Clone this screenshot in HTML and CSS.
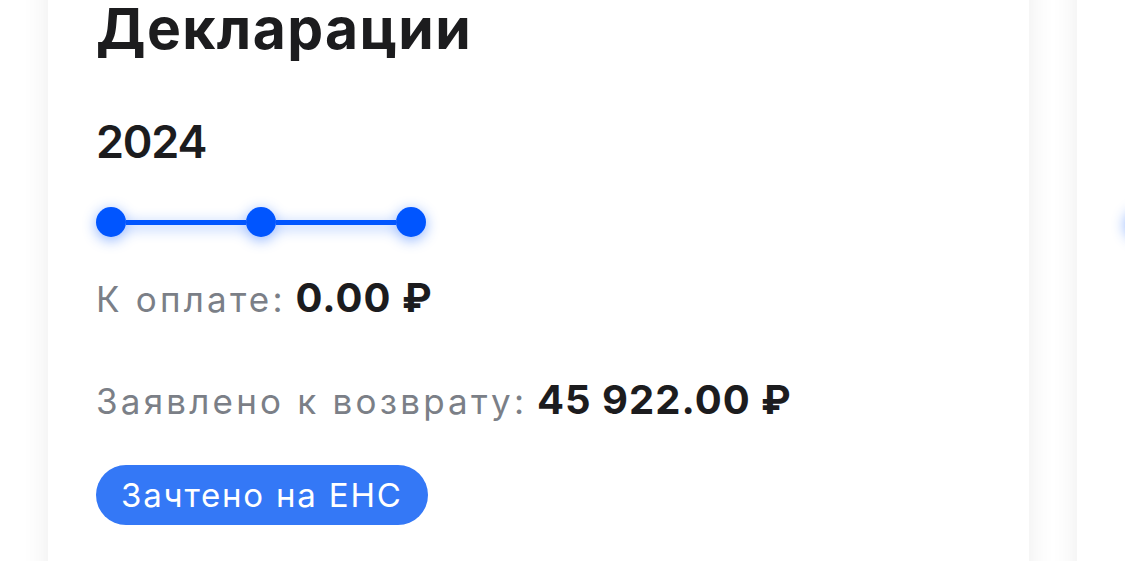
FILE: index.html
```html
<!DOCTYPE html>
<html lang="ru">
<head>
<meta charset="utf-8">
<title>Декларации</title>
<link rel="stylesheet" href="styles.css">
</head>
<body>
<div class="row">
  <section class="card">
    <h1 class="title">Декларации</h1>
    <div class="year">2024</div>
    <div class="stepper">
      <span class="dot"></span><span class="line"></span><span class="dot"></span><span class="line"></span><span class="dot"></span>
    </div>
    <p class="stat"><span class="label">К оплате:</span> <span class="value">0.00 ₽</span></p>
    <p class="stat"><span class="label">Заявлено к возврату:</span> <span class="value">45 922.00 ₽</span></p>
    <span class="badge">Зачтено на ЕНС</span>
  </section>
  <section class="card">
    <h1 class="title">Декларации</h1>
    <div class="year">2023</div>
    <div class="stepper">
      <span class="dot"></span><span class="line"></span><span class="dot"></span><span class="line"></span><span class="dot"></span>
    </div>
    <p class="stat"><span class="label">К оплате:</span> <span class="value">0.00 ₽</span></p>
    <p class="stat"><span class="label">Заявлено к возврату:</span> <span class="value">0.00 ₽</span></p>
  </section>
</div>
</body>
</html>
```
FILE: styles.css
```css
html, body {
  margin: 0;
  padding: 0;
  background: #ffffff;
  overflow: hidden;
}
body {
  font-family: Inter, "Noto Sans", sans-serif;
  color: #1c1c1e;
}
.row {
  display: flex;
  gap: 48px;
  padding-left: 48px;
  margin-top: -40px;
  height: 700px;
}
.card {
  flex: 0 0 981px;
  box-sizing: border-box;
  background: #fff;
  padding: 40px 48px 0 48px;
  box-shadow: 0 0 26px rgba(0, 0, 0, 0.08);
  display: flex;
  flex-direction: column;
  align-items: flex-start;
  overflow: hidden;
}
.title {
  margin: 0;
  font-size: 57px;
  line-height: 1;
  font-weight: 700;
  letter-spacing: 1.4px;
  white-space: nowrap;
}
.year {
  margin-top: 62px;
  font-size: 45px;
  line-height: 1;
  font-weight: 600;
  letter-spacing: -1.2px;
}
.stepper {
  margin-top: 43px;
  display: flex;
  align-items: center;
  filter: drop-shadow(0 3px 7px rgba(0, 85, 255, 0.45));
}
.dot {
  width: 30px;
  height: 30px;
  border-radius: 50%;
  background: #0055ff;
}
.line {
  width: 120px;
  height: 5px;
  background: #0055ff;
}
.stat {
  margin: 41px 0 0 0;
  font-size: 35px;
  line-height: 1;
  white-space: nowrap;
}
.stat + .stat {
  margin-top: 62px;
}
.label {
  color: #7b7f87;
  font-weight: 400;
  letter-spacing: 3.2px;
}
.value {
  color: #1c1c1e;
  font-size: 40px;
  font-weight: 700;
  letter-spacing: 1px;
}
.badge {
  margin-top: 45px;
  height: 60px;
  box-sizing: border-box;
  padding: 0 25px;
  border-radius: 30px;
  background: #3478f6;
  color: #ffffff;
  font-size: 33px;
  letter-spacing: 1.8px;
  display: inline-flex;
  align-items: center;
  white-space: nowrap;
}
```
